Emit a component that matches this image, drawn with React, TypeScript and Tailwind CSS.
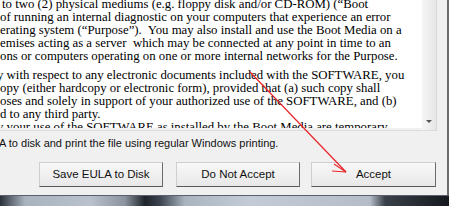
import React from "react";

const serif = { fontFamily: '"Liberation Serif", "Times New Roman", serif' } as const;

type Line = { t: string; ml: number };

const p1: Line[] = [
  { t: "to two (2) physical mediums (e.g. floppy disk and/or CD-ROM) (\u201cBoot", ml: 2 },
  { t: "of running an internal diagnostic on your computers that experience an error", ml: 0 },
  { t: "erating system (\u201cPurpose\u201d).  You may also install and use the Boot Media on a", ml: 0 },
  { t: "emises acting as a server  which may be connected at any point in time to an", ml: 0 },
  { t: "ons or computers operating on one or more internal networks for the Purpose.", ml: 0 },
];
const p2: Line[] = [
  { t: "y with respect to any electronic documents included with the SOFTWARE, you", ml: -3 },
  { t: "opy (either hardcopy or electronic form), provided that (a) such copy shall", ml: 0 },
  { t: "oses and solely in support of your authorized use of the SOFTWARE, and (b)", ml: 0 },
  { t: "d to any third party.", ml: 0 },
];
const p3: Line[] = [
  { t: "y your use of the SOFTWARE as installed by the Boot Media are temporary", ml: -3 },
];

function Para({ lines, cls }: { lines: Line[]; cls?: string }) {
  return (
    <div className={cls}>
      {lines.map((l, i) => (
        <div key={i} className="whitespace-pre h-[13px]" style={{ marginLeft: l.ml }}>
          {l.t}
        </div>
      ))}
    </div>
  );
}

function Btn({ children, cls }: { children: React.ReactNode; cls: string }) {
  return (
    <div
      className={`h-[25px] flex items-center justify-center border border-t-[#cfcfcf] border-l-[#cfcfcf] border-r-[#6a6a6a] border-b-[#5a5a5a] bg-gradient-to-b from-[#f8f8f8] to-[#e8e8e8] text-[11.5px] text-[#111] ${cls}`}
    >
      {children}
    </div>
  );
}

export default function App() {
  return (
    <div
      className="relative w-[449px] h-[206px] overflow-hidden bg-[#f0f0f0] flex flex-col"
      style={{ fontFamily: '"Liberation Sans", Arial, sans-serif' }}
    >
      <div className="flex h-[131px] shrink-0">
        <div
          className="w-[422px] h-[130px] bg-white overflow-hidden text-[12.8px] leading-[13px] text-black -mt-[2px]"
          style={serif}
        >
          <Para lines={p1} />
          <Para lines={p2} cls="mt-[6px]" />
          <Para lines={p3} />
        </div>
        <div className="w-[15px] h-[130px] bg-gradient-to-r from-[#f6f6f6] to-[#e6e6e6] flex flex-col justify-end border-r border-[#d8d8d8]">
          <div className="h-[17px] flex items-center justify-center">
            <div className="w-0 h-0 border-l-[3px] border-r-[3px] border-t-[3px] border-l-transparent border-r-transparent border-t-[#555]" />
          </div>
        </div>
        <div className="flex-1 bg-[#f0f0f0]" />
        <div className="w-[2px] bg-[#6b6b6b]" />
      </div>
      <div className="relative flex-1 flex flex-col">
        <div className="h-[1px] w-[438px] bg-[#dcdcdc] -mt-[1px]" />
        <div className="text-[11px] text-[#111] leading-[14px] mt-[5px] -ml-[1px] whitespace-nowrap">
          A to disk and print the file using regular Windows printing.
        </div>
        <div className="flex mt-[12px]">
          <Btn cls="ml-[39px] w-[124px]">Save EULA to Disk</Btn>
          <Btn cls="ml-[13px] w-[124px]">Do Not Accept</Btn>
          <Btn cls="ml-[11px] w-[125px]">Accept</Btn>
        </div>
        <div className="flex-1" />
        <div className="absolute right-0 top-0 bottom-[11px] w-[2px] bg-[#6b6b6b]" />
        <div className="h-[1px] bg-[#5a6068]" />
        <div
          className="h-[10px]"
          style={{
            background:
              "linear-gradient(90deg,#2b313a 0px,#5d6570 10px,#a9b3bf 25px,#b8c1cc 90px,#8a939e 125px,#1f242b 145px,#3b4350 160px,#aab4c0 185px,#c3ccd6 250px,#b3bcc7 370px,#3a4049 385px,#15191e 449px)",
          }}
        />
      </div>
      <svg className="absolute left-0 top-0 pointer-events-none" width="449" height="206">
        <line x1="250" y1="72" x2="346" y2="172" stroke="#e8242a" strokeWidth="1.2" />
        <line x1="346" y1="172" x2="334" y2="164" stroke="#e8242a" strokeWidth="1.2" />
        <line x1="346" y1="172" x2="332" y2="171" stroke="#e8242a" strokeWidth="1.2" />
      </svg>
    </div>
  );
}
